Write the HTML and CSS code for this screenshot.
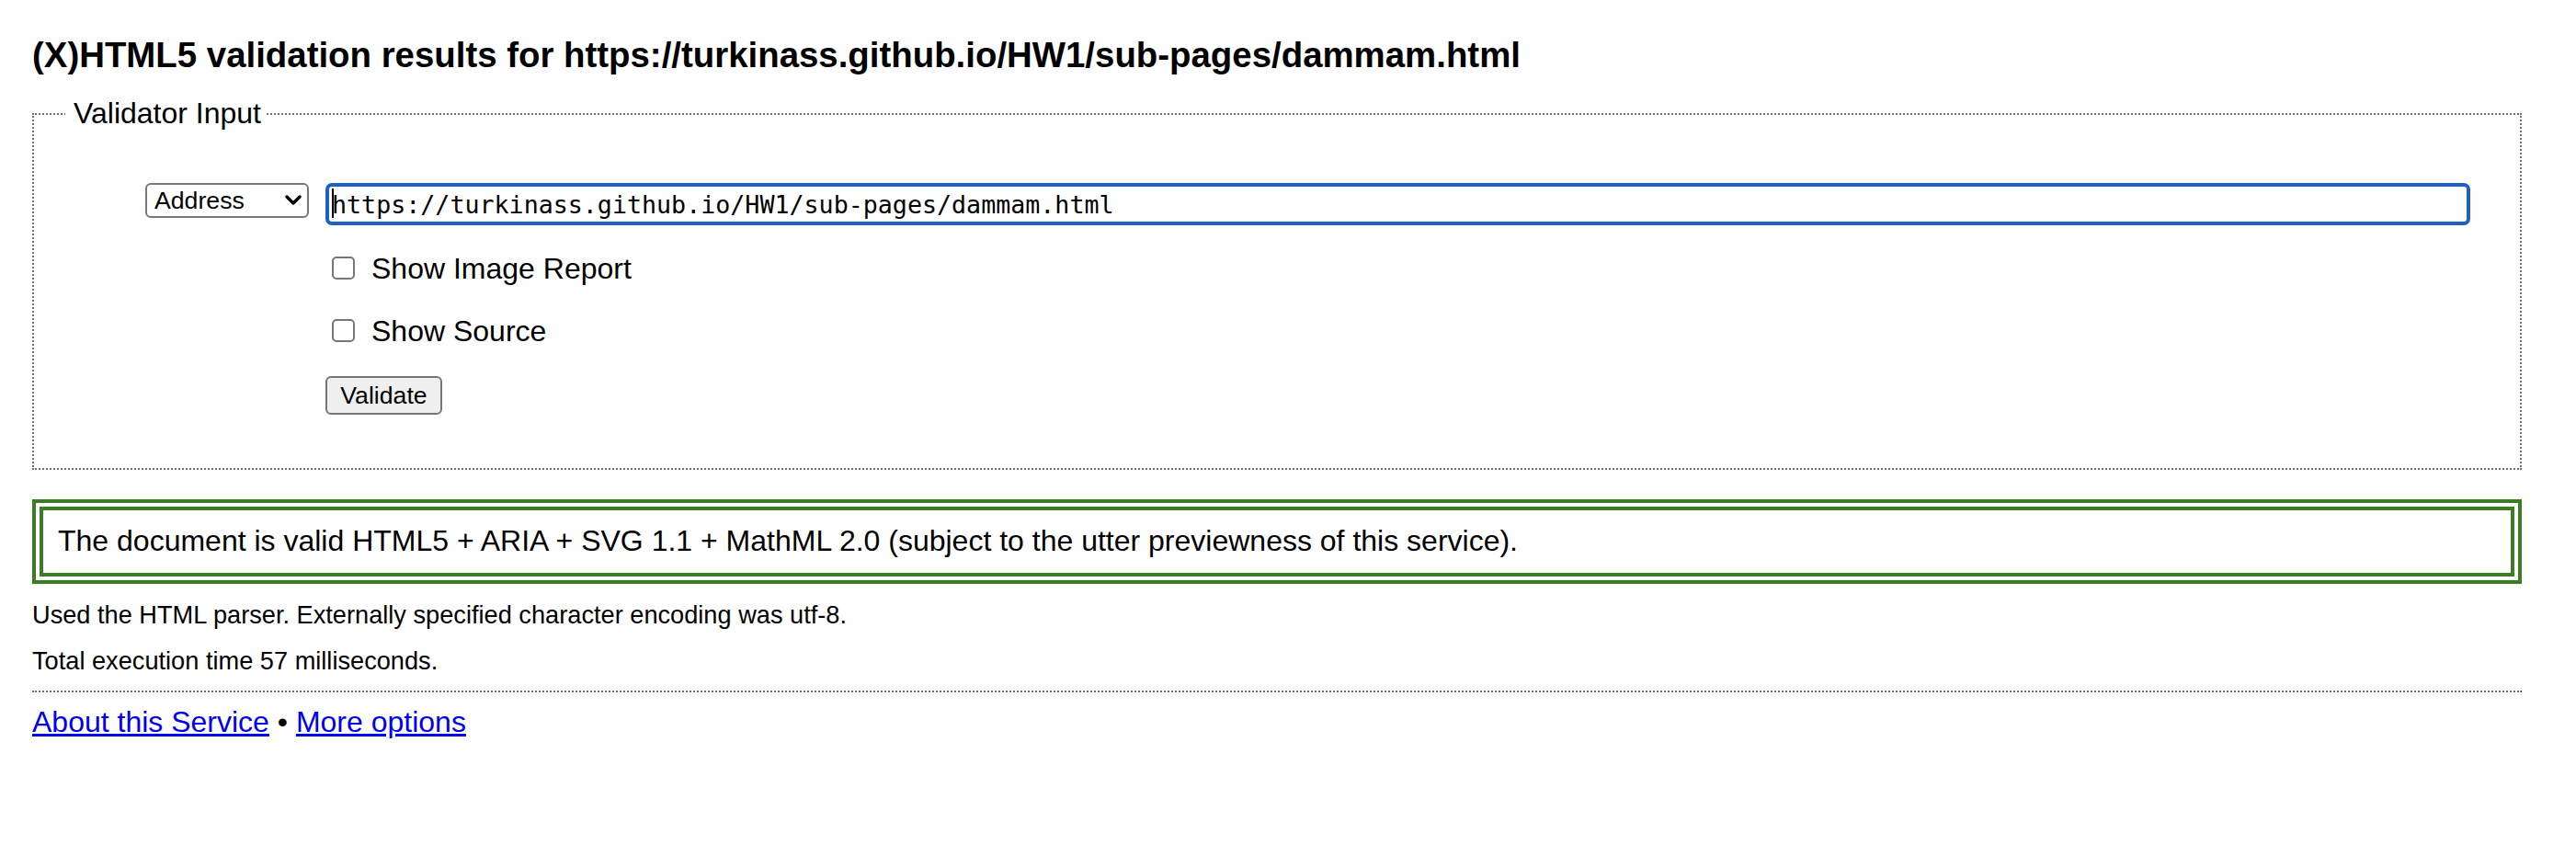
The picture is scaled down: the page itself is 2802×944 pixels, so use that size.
FILE: index.html
```html
<!DOCTYPE html>
<html lang="en">
<head>
<meta charset="utf-8">
<title>Validation results</title>
<link rel="stylesheet" href="styles.css">
</head>
<body>
<h2 class="title">(X)HTML5 validation results for https://turkinass.github.io/HW1/sub-pages/dammam.html</h2>
<fieldset class="input-box">
  <legend class="legend">Validator Input</legend>
  <div class="form-grid">
    <div class="type-cell">
      <span class="select-wrap">
        <select class="type-select"><option>Address</option></select>
        <svg class="chevron" width="18" height="12" viewBox="0 0 18 12"><path d="M2 2 L9 9 L16 2" fill="none" stroke="#000" stroke-width="3.4" stroke-linecap="round" stroke-linejoin="round"/></svg>
      </span>
    </div>
    <div class="fields">
      <span class="url-wrap">
        <input class="url" type="text" value="https://turkinass.github.io/HW1/sub-pages/dammam.html">
        <span class="caret"></span>
      </span>
      <label class="check-row row-a"><input type="checkbox" class="check"><span>Show Image Report</span></label>
      <label class="check-row row-b"><input type="checkbox" class="check"><span>Show Source</span></label>
      <button class="validate" type="button">Validate</button>
    </div>
  </div>
</fieldset>
<p class="success">The document is valid HTML5 + ARIA + SVG 1.1 + MathML 2.0 (subject to the utter previewness of this service).</p>
<p class="note first">Used the HTML parser. Externally specified character encoding was utf-8.</p>
<p class="note">Total execution time 57 milliseconds.</p>
<hr class="rule">
<p class="links"><a href="#">About this Service</a> • <a href="#">More options</a></p>
</body>
</html>
```
FILE: styles.css
```css
html, body {
  background: #fff;
}
body {
  margin: 0;
  padding: 0 59px 0 35px;
  font-family: "Liberation Sans", Arial, sans-serif;
  font-size: 32px;
  color: #000;
}
.title {
  margin: 39px 0 25px;
  font-size: 38.4px;
  line-height: 41px;
  font-weight: bold;
}
.input-box {
  margin: 0;
  border: 2px dotted #6f6f6f;
  padding: 0 54px 58px 34px;
  min-width: 0;
}
.legend {
  padding: 0 5px 0 9px;
  font-size: 32px;
  line-height: 37px;
}
.form-grid {
  display: grid;
  grid-template-columns: 178px 1fr;
  column-gap: 18px;
  margin: 57px 0 0 87px;
  align-items: start;
}
.select-wrap {
  position: relative;
  display: block;
  width: 178px;
  height: 38px;
}
.type-select {
  appearance: none;
  -webkit-appearance: none;
  display: block;
  width: 178px;
  height: 38px;
  margin: 0;
  border: 2px solid #777;
  border-radius: 6px;
  background: #fff;
  padding: 0 0 0 8px;
  font-family: "Liberation Sans", Arial, sans-serif;
  font-size: 26.67px;
  color: #000;
}
.chevron {
  position: absolute;
  right: 8px;
  top: 13px;
  pointer-events: none;
}
.fields {
  display: flex;
  flex-direction: column;
  align-items: flex-start;
}
.url-wrap {
  position: relative;
  display: block;
  align-self: stretch;
}
.url {
  display: block;
  box-sizing: border-box;
  width: 100%;
  height: 46px;
  margin: 0;
  border: 4px solid #1f5fc6;
  border-radius: 7px;
  padding: 0 0 0 3px;
  font-family: "DejaVu Sans Mono", "Liberation Mono", monospace;
  font-size: 26.67px;
  color: #000;
  outline: none;
  background: #fff;
}
.caret {
  position: absolute;
  left: 7px;
  top: 6px;
  width: 2px;
  height: 32px;
  background: #000;
}
.check-row {
  display: flex;
  align-items: center;
  height: 37px;
  line-height: 37px;
}
.row-a {
  margin-top: 29px;
}
.row-b {
  margin-top: 31px;
}
.check {
  appearance: none;
  -webkit-appearance: none;
  box-sizing: border-box;
  width: 25px;
  height: 25px;
  margin: -2px 18px 0 7px;
  border: 2px solid #767676;
  border-radius: 5px;
  background: #fff;
}
.validate {
  margin-top: 30px;
  box-sizing: border-box;
  width: 127px;
  height: 42px;
  border: 2px solid #767676;
  border-radius: 6px;
  background: #efefef;
  padding: 0;
  font-family: "Liberation Sans", Arial, sans-serif;
  font-size: 26.67px;
  color: #000;
}
.success {
  margin: 32px 0 0;
  border: 12px double #3a7d23;
  padding: 15px 16px 16px;
  line-height: 37px;
}
.note {
  margin: 18px 0 0;
  font-size: 27.2px;
  line-height: 32px;
}
.rule {
  margin: 16px 0 0;
  border: 0;
  border-top: 2px dotted #6f6f6f;
  height: 0;
}
.links {
  margin: 14px 0 0;
  line-height: 37px;
}
.links a {
  color: #0000ee;
}
```
